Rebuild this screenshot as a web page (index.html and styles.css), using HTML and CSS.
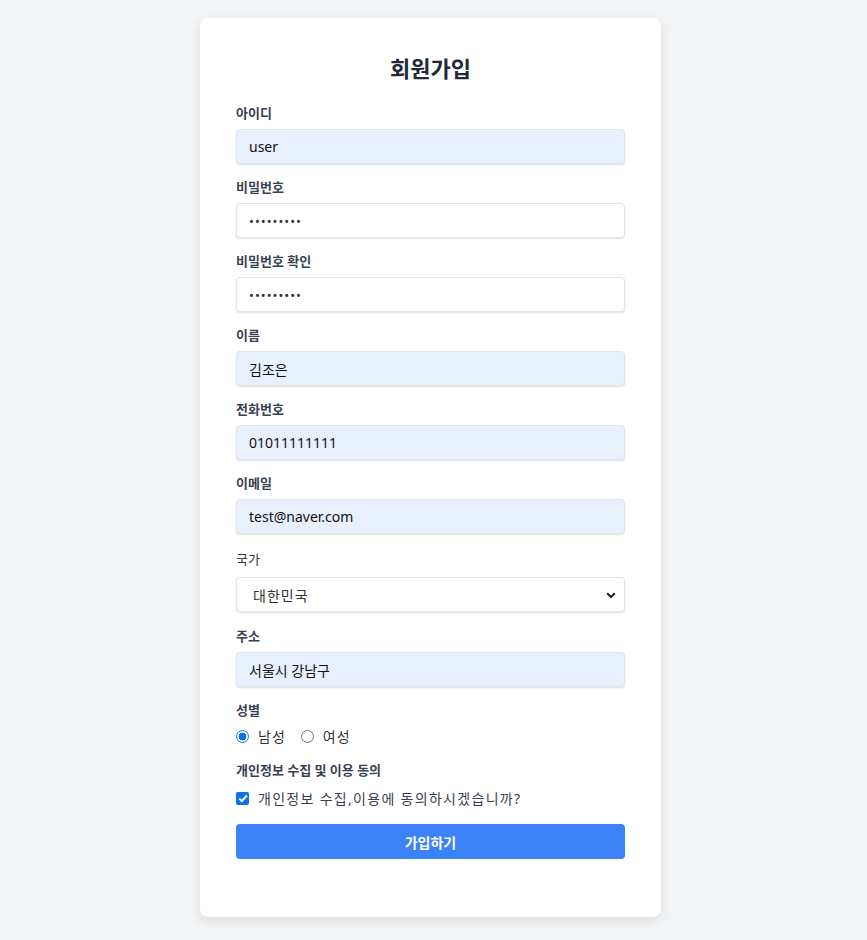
FILE: index.html
```html
<!DOCTYPE html>
<html lang="ko">
<head>
<meta charset="utf-8">
<title>회원가입</title>
<link rel="stylesheet" href="styles.css">
</head>
<body>
<main class="page">
  <form class="card">
    <h1 class="title">회원가입</h1>

    <div class="field">
      <label class="label">아이디</label>
      <div class="input filled">user</div>
    </div>
    <div class="field">
      <label class="label">비밀번호</label>
      <div class="input pw">•••••••••</div>
    </div>
    <div class="field">
      <label class="label">비밀번호 확인</label>
      <div class="input pw">•••••••••</div>
    </div>
    <div class="field">
      <label class="label">이름</label>
      <div class="input filled">김조은</div>
    </div>
    <div class="field">
      <label class="label">전화번호</label>
      <div class="input filled">01011111111</div>
    </div>
    <div class="field">
      <label class="label">이메일</label>
      <div class="input filled">test@naver.com</div>
    </div>
    <div class="field field-select">
      <label class="label label-plain">국가</label>
      <div class="input select">
        <span>대한민국</span>
        <svg class="chev" width="10" height="7" viewBox="0 0 10 7"><path d="M1.2 1.2 L5 5 L8.8 1.2" fill="none" stroke="#222" stroke-width="2"/></svg>
      </div>
    </div>
    <div class="field">
      <label class="label">주소</label>
      <div class="input filled">서울시 강남구</div>
    </div>
    <div class="field">
      <span class="label">성별</span>
      <div class="radios">
        <span class="opt"><span class="radio on"></span>남성</span>
        <span class="opt"><span class="radio"></span>여성</span>
      </div>
    </div>
    <div class="field">
      <span class="label">개인정보 수집 및 이용 동의</span>
      <div class="agree">
        <span class="check"><svg width="10" height="9" viewBox="0 0 10 9"><path d="M1.3 4.6 L3.9 7.1 L8.8 1.5" fill="none" stroke="#fff" stroke-width="2"/></svg></span>
        <span class="agree-text">개인정보 수집,이용에 동의하시겠습니까?</span>
      </div>
    </div>
    <div class="btn">가입하기</div>
  </form>
</main>
</body>
</html>
```

FILE: styles.css
```css
* { box-sizing: border-box; }
html, body { margin: 0; padding: 0; }
body {
  background: #f3f4f6;
  font-family: "Noto Sans", "Noto Sans CJK KR", sans-serif;
  color: #1f2937;
}
.page {
  display: flex;
  justify-content: center;
  padding: 18px 0 24px 0;
}
.card {
  width: 461px;
  margin-right: 6px;
  background: #fff;
  border-radius: 8px;
  padding: 36px 36px 58px;
  box-shadow: 0 4px 12px rgba(0,0,0,0.1);
}
.title {
  margin: 0 0 21px;
  text-align: center;
  font-size: 22px;
  line-height: 28px;
  font-weight: 700;
  color: #1f2937;
}
.field {
  display: flex;
  flex-direction: column;
  margin-bottom: 13px;
}
.label {
  display: block;
  font-size: 13px;
  line-height: 20px;
  font-weight: 700;
  color: #374151;
  margin-bottom: 6px;
}
.label-plain {
  font-weight: 400;
  color: #333;
  margin-top: 2px;
  margin-bottom: 8px;
}
.field-select { margin-bottom: 14px; }
.input {
  height: 35px;
  border: 1px solid #e2e4e8;
  border-radius: 4px;
  box-shadow: 0 1px 2px rgba(0,0,0,0.12);
  padding: 0 12px;
  display: flex;
  align-items: center;
  font-size: 14px;
  color: #111;
  background: #fff;
}
.filled { background: #e8f0fe; }
.pw { font-size: 13px; letter-spacing: 1px; color: #333; }
.select {
  justify-content: space-between;
  padding: 0 8px 0 16px;
  color: #333;
  letter-spacing: 1px;
}
.chev { margin-top: 1px; }
.radios {
  display: flex;
  align-items: center;
  gap: 15px;
  height: 20px;
  margin-top: 0;
  margin-bottom: 1px;
}
.opt {
  display: flex;
  align-items: center;
  font-size: 14px;
  color: #333;
  letter-spacing: 1px;
}
.radio {
  width: 13px;
  height: 13px;
  border-radius: 50%;
  border: 1px solid #767676;
  margin-right: 9px;
  background: #fff;
}
.radio.on {
  border: 1px solid #1a73e8;
  background: radial-gradient(circle, #0b72e7 0 3.6px, #fff 4.2px);
}
.agree {
  display: flex;
  align-items: center;
  height: 20px;
  margin-top: 2px;
}
.check {
  width: 13px;
  height: 13px;
  border-radius: 2px;
  background: #0b72e7;
  display: flex;
  align-items: center;
  justify-content: center;
  margin-right: 9px;
}
.agree-text {
  font-size: 14px;
  color: #374151;
  letter-spacing: 1.3px;
}
.btn {
  margin-top: 16px;
  height: 35px;
  border-radius: 4px;
  background: #3b82f6;
  color: #fff;
  font-size: 14px;
  font-weight: 700;
  display: flex;
  align-items: center;
  justify-content: center;
}
```
